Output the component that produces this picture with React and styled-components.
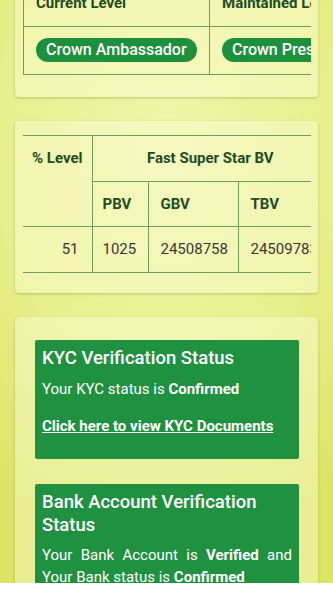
import React from 'react';
import styled, { createGlobalStyle } from 'styled-components';

const GlobalStyle = createGlobalStyle`
  body {
    margin: 0;
    background: #ffffff;
    font-family: Roboto, "Noto Sans", Arial, sans-serif;
  }
`;

const LINE = '#6f9f5a';

const Screen = styled.div`
  height: 583px;
  overflow: hidden;
  background: radial-gradient(ellipse 90% 70% at 50% 25%, #f1f5aa 0%, #e8ef8d 55%, #dbe464 100%);
`;

/* content is scrolled a little: first card's top is above the viewport */
const Content = styled.div`
  display: flex;
  flex-direction: column;
  gap: 24px;
  padding: 0 15px;
  margin-top: -34px;
`;

const Card = styled.div`
  background: rgba(255, 255, 230, 0.38);
  border-radius: 4px;
  box-shadow: 0 1px 3px rgba(70, 80, 0, 0.28);
  padding: ${(p) => p.$pad || '14px 7px 22px 8px'};
  display: flex;
  flex-direction: column;
  gap: 25px;
`;

const TableWrap = styled.div`
  overflow: hidden;
`;

const Table = styled.table`
  border-collapse: collapse;
  table-layout: fixed;
  width: ${(p) => p.$width}px;
  white-space: nowrap;
  font-size: 15px;
`;

const Row = styled.tr`
  height: ${(p) => p.$h}px;
  border-bottom: 1px solid ${LINE};
  border-top: ${(p) => (p.$top ? `1px solid ${LINE}` : 'none')};
`;

const Head = styled.th`
  font-weight: 700;
  color: #1f4c23;
  text-align: ${(p) => p.$align || 'left'};
  vertical-align: ${(p) => p.$valign || 'middle'};
  padding: ${(p) => p.$pad || '0 12px'};
  border-left: ${(p) => (p.$noLeft ? 'none' : `1px solid ${LINE}`)};
  border-bottom: 1px solid ${LINE};
  overflow: hidden;
`;

const Cell = styled.td`
  color: #383838;
  text-align: ${(p) => p.$align || 'left'};
  padding: ${(p) => p.$pad || '0 12px'};
  border-left: ${(p) => (p.$noLeft ? 'none' : `1px solid ${LINE}`)};
  overflow: hidden;
`;

const Pill = styled.span`
  display: inline-block;
  height: 24px;
  line-height: 24px;
  padding: 0 10px;
  border-radius: 12px;
  background: #1d8f3d;
  color: #ffffff;
  font-size: 16px;
  font-weight: 500;
`;

const StatusBox = styled.div`
  background: #1f9141;
  border-radius: 2px;
  color: #ffffff;
  padding: 7px 7px ${(p) => p.$bottom || 22}px;
`;

const StatusTitle = styled.h3`
  margin: 0;
  font-size: 18.5px;
  font-weight: 500;
  line-height: 23px;
`;

const StatusText = styled.p`
  margin: ${(p) => p.$margin || '8px 0 0'};
  font-size: 15px;
  line-height: 22px;
  text-align: justify;
  b {
    font-weight: 700;
  }
`;

const DocLink = styled.a`
  display: block;
  margin-top: 15px;
  font-size: 15px;
  line-height: 22px;
  font-weight: 700;
  color: #ffffff;
  text-decoration: underline;
`;

export default function App() {
  return (
    <Screen>
      <GlobalStyle />
      <Content>
        <Card>
          <TableWrap>
            <Table $width={372}>
              <colgroup>
                <col style={{ width: 186 }} />
                <col style={{ width: 186 }} />
              </colgroup>
              <tbody>
                <Row $h={46}>
                  <Head>Current Level</Head>
                  <Head>Maintained Level</Head>
                </Row>
                <Row $h={48}>
                  <Cell>
                    <Pill>Crown Ambassador</Pill>
                  </Cell>
                  <Cell>
                    <Pill>Crown President</Pill>
                  </Cell>
                </Row>
              </tbody>
            </Table>
          </TableWrap>
        </Card>

        <Card $pad="14px 7px 20px 8px">
          <TableWrap>
            <Table $width={305}>
              <colgroup>
                <col style={{ width: 69 }} />
                <col style={{ width: 56 }} />
                <col style={{ width: 90 }} />
                <col style={{ width: 90 }} />
              </colgroup>
              <tbody>
                <Row $h={46} $top>
                  <Head rowSpan={2} $noLeft $align="center" $valign="top" $pad="13px 2px 0">
                    % Level
                  </Head>
                  <Head colSpan={3} $align="center">
                    Fast Super Star BV
                  </Head>
                </Row>
                <Row $h={45}>
                  <Head $pad="0 10px">PBV</Head>
                  <Head>GBV</Head>
                  <Head>TBV</Head>
                </Row>
                <Row $h={46}>
                  <Cell $noLeft $align="right" $pad="0 13px 0 0">
                    51
                  </Cell>
                  <Cell $pad="0 10px">1025</Cell>
                  <Cell>24508758</Cell>
                  <Cell $pad="0 0 0 12px">24509783</Cell>
                </Row>
              </tbody>
            </Table>
          </TableWrap>
        </Card>

        <Card $pad="23px 19px 30px 20px">
          <StatusBox>
            <StatusTitle>KYC Verification Status</StatusTitle>
            <StatusText>
              Your KYC status is <b>Confirmed</b>
            </StatusText>
            <DocLink href="#">Click here to view KYC Documents</DocLink>
          </StatusBox>
          <StatusBox $bottom={14}>
            <StatusTitle>Bank Account Verification Status</StatusTitle>
            <StatusText $margin="7px 0 0">
              Your Bank Account is <b>Verified</b> and Your Bank status is <b>Confirmed</b>
            </StatusText>
          </StatusBox>
        </Card>
      </Content>
    </Screen>
  );
}
